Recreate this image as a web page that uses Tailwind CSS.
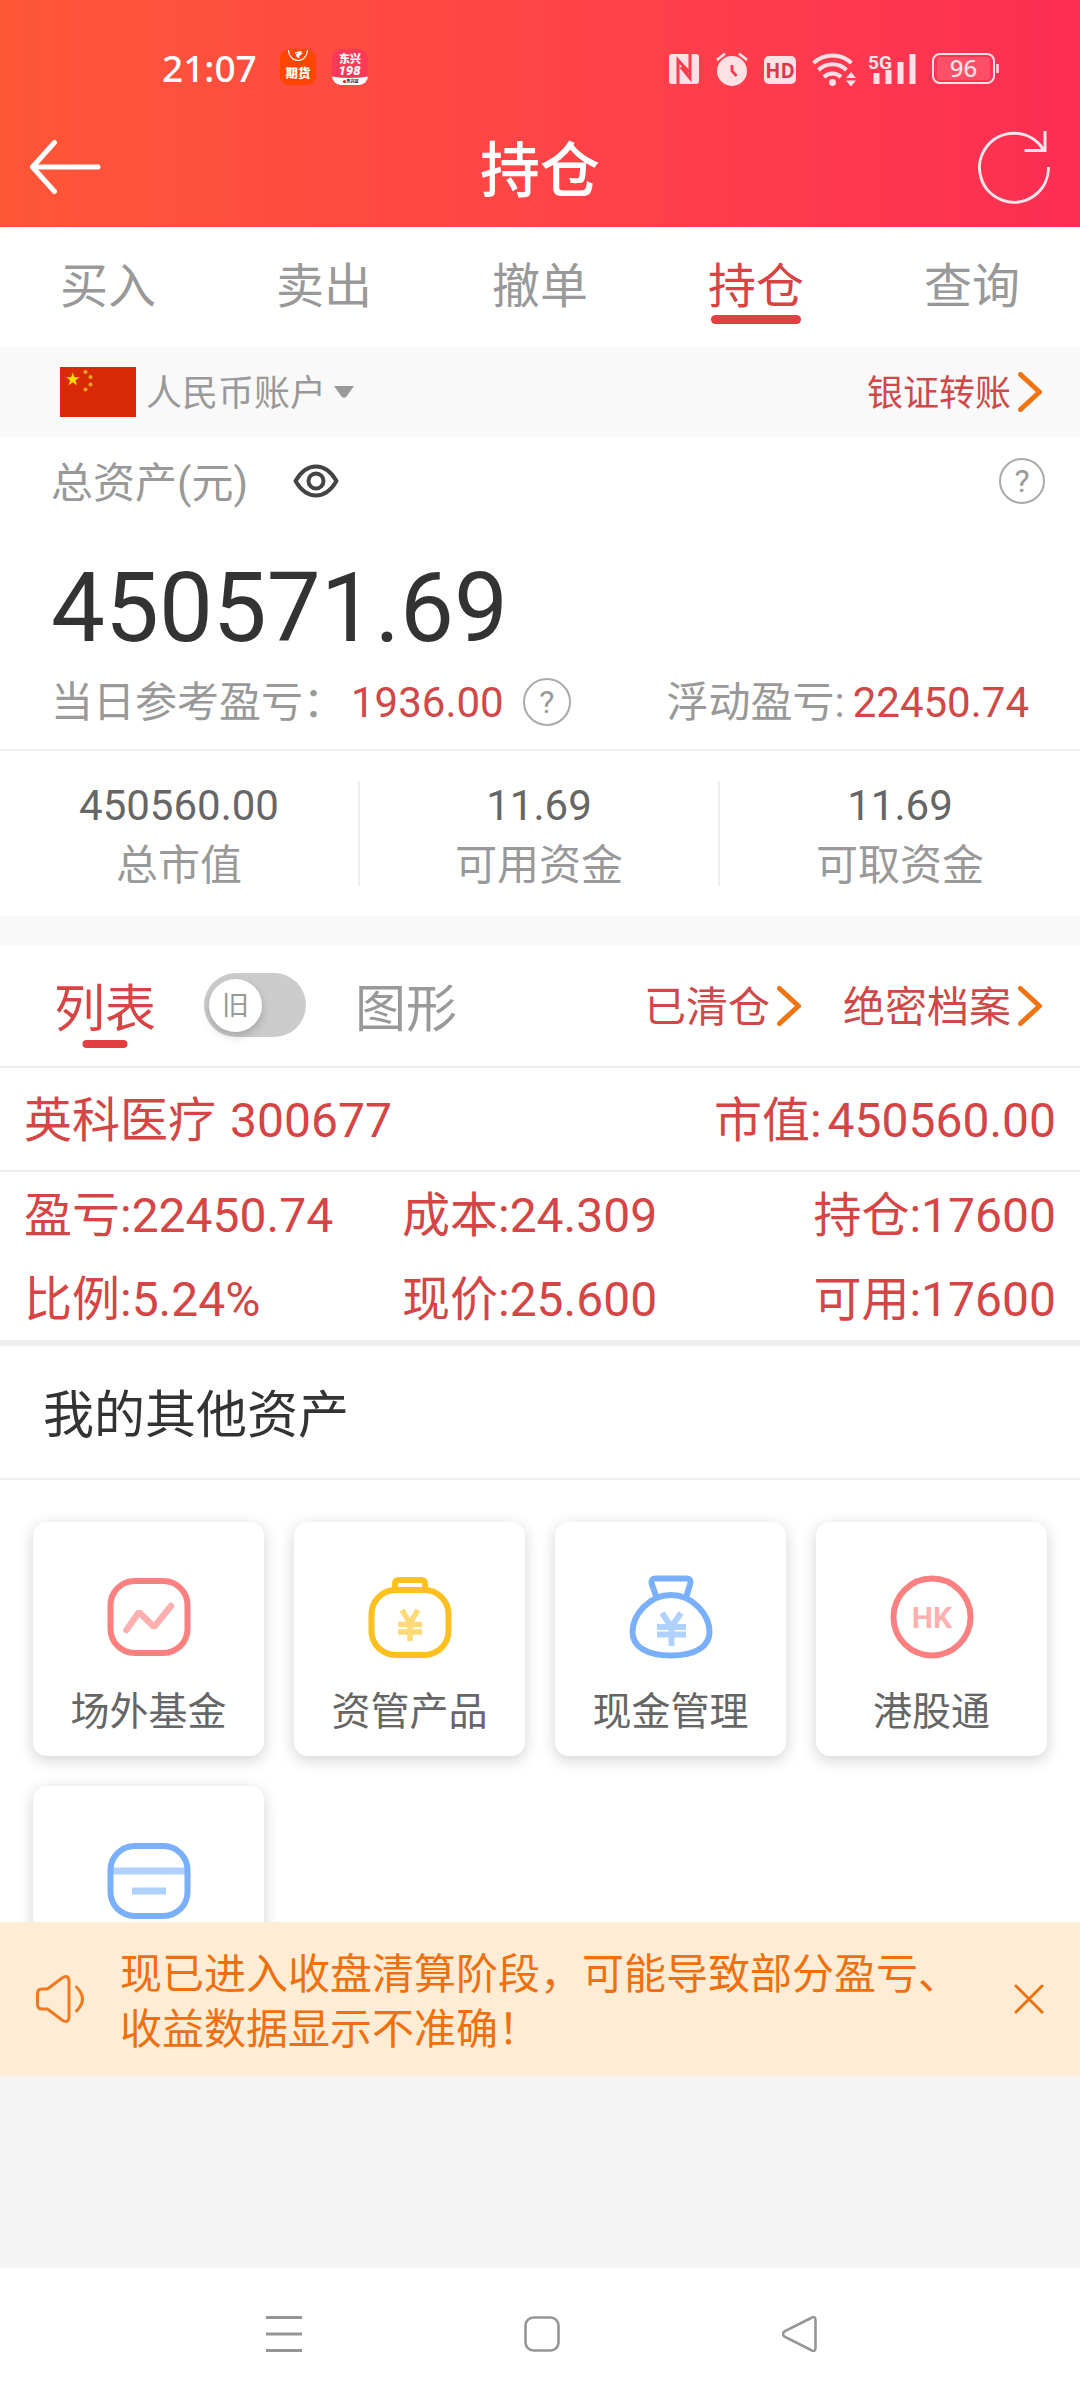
<!DOCTYPE html>
<html lang="zh-CN">
<head>
<meta charset="utf-8">
<meta name="viewport" content="width=device-width, initial-scale=1">
<title>持仓</title>
<script src="https://cdn.jsdelivr.net/npm/@tailwindcss/browser@4"></script>
</head>
<body class="flex h-screen flex-col overflow-hidden bg-[#f4f4f4] font-[Roboto,'Noto_Sans_CJK_SC',sans-serif] text-[42px] leading-[54px] text-[#999]">

<!-- Status bar and title bar -->
<header class="shrink-0 bg-linear-to-r from-[#ff5636] to-[#fd2d53] text-white">
  <div class="flex h-[109px] items-end justify-between pr-[81px] pb-[23px] pl-[162px]">
    <div class="flex items-center">
      <span class="w-[118px] pt-0.5 font-['Noto_Sans',sans-serif] text-[37px] leading-[36px] font-medium">21:07</span>
      <svg class="mr-4 size-9" viewBox="0 0 36 36" role="img" aria-label="期货">
        <rect width="36" height="36" rx="9" fill="#ff4500"/>
        <path d="M8.500 1a9.500 10.500 0 0 0 19 0" fill="none" stroke="#fff" stroke-width="1.200"/>
        <path d="M15 4l5-1-2 2 4-1-5 4 2-3-3 1M18 6l1 3" fill="none" stroke="#fff" stroke-width="1.400"/>
        <text x="18" y="28.500" text-anchor="middle" font-size="12.500" font-weight="900" fill="#fff">期货</text>
      </svg>
      <svg class="size-9" viewBox="0 0 36 36" role="img" aria-label="东兴198">
        <defs><clipPath id="dx"><rect width="36" height="36" rx="9"/></clipPath></defs>
        <g clip-path="url(#dx)">
          <rect width="36" height="36" fill="#fb3a58"/>
          <path d="M0 27.500Q18 30.500 36 27.500V36H0z" fill="#fff"/>
        </g>
        <text x="18" y="13.500" text-anchor="middle" font-size="11" font-weight="900" fill="#fff">东兴</text>
        <text x="17.500" y="26" text-anchor="middle" font-size="13" font-weight="900" font-style="italic" fill="#fff">198</text>
        <circle cx="12.500" cy="32.500" r="1.600" fill="#d22"/>
        <text x="20.500" y="34.200" text-anchor="middle" font-size="4" font-weight="900" fill="#222">东兴证</text>
      </svg>
    </div>
    <div class="flex items-center text-[#ffe1e5]">
      <svg class="mr-[17px] h-[34px] w-[30px]" viewBox="0 0 30 34" role="img" aria-label="NFC">
        <rect y="2" width="30" height="30" rx="3" fill="currentColor"/>
        <path d="M9 32V8l11 12M21 2v24L12 15" fill="none" stroke="#fd3b4a" stroke-width="3"/>
      </svg>
      <svg class="mr-4 h-[34px] w-8" viewBox="0 0 32 34" role="img" aria-label="闹钟">
        <circle cx="16" cy="19" r="15" fill="currentColor"/>
        <path d="M1 8l8-6.500M31 8l-8-6.500" stroke="currentColor" stroke-width="2.600"/>
        <path d="M16 13v6l4.500 5" fill="none" stroke="#fd3b4a" stroke-width="2.800"/>
      </svg>
      <svg class="mr-4 h-[34px] w-8" viewBox="0 0 32 34" role="img" aria-label="HD">
        <rect y="4" width="32" height="28" rx="5" fill="currentColor"/>
        <text x="16" y="25.500" text-anchor="middle" font-size="20" font-weight="700" fill="#d93a48" font-family="'Noto Sans CJK SC'">HD</text>
      </svg>
      <svg class="mr-3 h-[34px] w-[45px]" viewBox="0 0 45 34" role="img" aria-label="Wi-Fi">
        <g fill="none" stroke="currentColor" stroke-width="4">
          <path d="M1.500 11a28 28 0 0 1 38 0"/>
          <path d="M6.500 18a20 20 0 0 1 28 0"/>
          <path d="M12 25a12 12 0 0 1 17 0"/>
        </g>
        <circle cx="20.500" cy="30.500" r="3.400" fill="currentColor"/>
        <path d="M39 20l5 6H34zM39 34.500l5-6H34z" fill="currentColor"/>
      </svg>
      <svg class="mr-4 h-[34px] w-[47px] overflow-visible" viewBox="0 0 47 34" role="img" aria-label="5G">
        <text x="-1" y="16.500" font-size="19" font-weight="700" fill="currentColor" font-family="Roboto">5G</text>
        <path d="M7.500 21v11M19.500 18v14M31.500 10v22M43.500 2v30" stroke="currentColor" stroke-width="6"/>
      </svg>
      <svg class="h-[34px] w-[67px]" viewBox="0 0 67 34" role="img" aria-label="96%">
        <rect x="1" y="2" width="61" height="29" rx="7" fill="none" stroke="currentColor" stroke-width="2"/>
        <rect x="5" y="5" width="53" height="23" rx="3" fill="#fff" opacity=".14"/>
        <path d="M65.500 12v9" stroke="currentColor" stroke-width="2.500"/>
        <text x="31.500" y="25" text-anchor="middle" font-size="24" font-weight="500" fill="currentColor" font-family="'Noto Sans'">96</text>
      </svg>
    </div>
  </div>
  <div class="flex h-[118px] items-center justify-between px-[30px]">
    <button type="button" aria-label="返回" class="w-[72px]">
      <svg class="h-[60px] w-[72px]" viewBox="0 0 72 60"><path d="M24.500 4.500L2.500 29l22 24.500M2.500 29H68" fill="none" stroke="#fff" stroke-width="5" stroke-linecap="round" stroke-linejoin="round"/></svg>
    </button>
    <h1 class="pt-2 text-[60px] leading-[60px] font-medium">持仓</h1>
    <button type="button" aria-label="刷新" class="w-[72px]">
      <svg class="size-[74px]" viewBox="0 0 74 74"><path d="M70.500 36A34.500 34.500 0 1 1 65 18" fill="none" stroke="#ffe6ea" stroke-width="3"/><path d="M67 0V19.500H46.500" fill="none" stroke="#ffe6ea" stroke-width="3"/></svg>
    </button>
  </div>
</header>

<main class="min-h-0 flex-1 overflow-hidden bg-white">
  <nav class="grid h-[120px] grid-cols-5 text-center text-[48px] leading-[120px]" aria-label="交易">
    <a href="#buy">买入</a>
    <a href="#sell">卖出</a>
    <a href="#cancel">撤单</a>
    <a href="#hold" aria-current="page" class="relative text-[#d94343] after:absolute after:bottom-[23px] after:left-1/2 after:h-[9px] after:w-[90px] after:-translate-x-1/2 after:rounded-full after:bg-[#e04042]">持仓</a>
    <a href="#query">查询</a>
  </nav>

  <!-- Account selector -->
  <div class="flex h-[90px] items-center justify-between bg-[#f9f9f9] pr-[38px] pl-[60px] text-[36px] leading-[54px]">
    <div class="flex items-center">
      <svg class="mr-[10px] h-[50px] w-[76px]" viewBox="0 0 76 50" role="img" aria-label="中国">
        <rect width="76" height="50" fill="#d82a08"/>
        <path d="M12.800 5.500l1.700 4.800h5l-4 3 1.500 4.900-4.200-3-4.200 3 1.500-4.900-4-3h5z" fill="#ffde00"/>
        <g fill="#f5a31c"><circle cx="25.500" cy="5" r="2"/><circle cx="30.500" cy="10" r="2"/><circle cx="30.500" cy="17.500" r="2"/><circle cx="25.500" cy="22.500" r="2"/></g>
      </svg>
      <select aria-label="账户" class="mr-2 w-[180px] appearance-none bg-transparent pt-1"><option>人民币账户</option></select>
      <svg class="h-3 w-5" viewBox="0 0 20 12"><path d="M0 0h20l-7.500 10.500q-2.500 2.500-5 0z" fill="#999"/></svg>
    </div>
    <a href="#transfer" class="flex items-center gap-[7px] text-[#d04848]"><span class="pt-1">银证转账</span>
      <svg class="h-10 w-6" viewBox="0 0 24 40"><path d="M2.500 2.500L21.500 20 2.500 37.500" fill="none" stroke="#f07412" stroke-width="5" stroke-linecap="round"/></svg>
    </a>
  </div>

  <!-- Asset summary -->
  <section aria-label="总资产">
    <div class="flex h-[94px] items-center pr-[35px] pb-[6px] pl-[51px]">
      <h2 class="pt-[6px]">总资产(元)</h2>
      <button type="button" aria-label="显示或隐藏金额" class="ml-[45px]">
        <svg class="h-[34px] w-[46px]" viewBox="0 0 46 34" fill="none" stroke="#444" stroke-width="4"><path d="M2.500 17Q11 2.500 23 2.500T43.500 17Q35 31.500 23 31.500T2.500 17z" stroke-linejoin="round"/><circle cx="23" cy="17" r="7.500"/></svg>
      </button>
      <button type="button" aria-label="总资产说明" class="ml-auto flex size-[46px] items-center justify-center rounded-full border-2 border-[#aaa] text-[32px]">?</button>
    </div>
    <p class="mt-[21px] pl-[51px] text-[96px] leading-[112px] text-[#333]">450571.69</p>
    <div class="mt-[7px] flex h-[78px] items-center justify-between pr-[51px] pb-4 pl-[51px]">
      <p class="flex items-center"><span class="pt-0.5">当日参考盈亏：</span><span class="ml-[6px] pt-0.5 text-[#d04848]">1936.00</span>
        <button type="button" aria-label="当日参考盈亏说明" class="ml-[19px] flex size-[48px] items-center justify-center rounded-full border-2 border-[#aaa] text-[32px]">?</button>
      </p>
      <p class="pt-0.5">浮动盈亏:<span class="ml-2 text-[#d04848]">22450.74</span></p>
    </div>
    <dl class="grid grid-cols-3 divide-x-2 divide-[#eee] border-t-2 border-[#eee] py-[30px] text-center">
      <div class="flex h-[105px] flex-col-reverse justify-center pt-1"><dt class="leading-[60px]">总市值</dt><dd class="leading-[60px] text-[#666]">450560.00</dd></div>
      <div class="flex h-[105px] flex-col-reverse justify-center pt-1"><dt class="leading-[60px]">可用资金</dt><dd class="leading-[60px] text-[#666]">11.69</dd></div>
      <div class="flex h-[105px] flex-col-reverse justify-center pt-1"><dt class="leading-[60px]">可取资金</dt><dd class="leading-[60px] text-[#666]">11.69</dd></div>
    </dl>
  </section>

  <!-- Positions -->
  <section aria-label="持仓列表" class="border-t-[30px] border-[#f9f9f9]">
    <div class="flex h-[122px] items-center border-b-2 border-[#eee] pr-[38px] pl-[54px]">
      <a href="#list" class="relative pt-2 text-[51px] leading-[112px] text-[#d94343] after:absolute after:bottom-[18px] after:left-1/2 after:h-2 after:w-[45px] after:-translate-x-1/2 after:rounded-full after:bg-[#e04042]">列表</a>
      <label class="relative mb-0.5 ml-12 flex h-[64px] w-[102px] items-center rounded-full bg-[#ccc] pl-[5px]">
        <input type="checkbox" role="switch" aria-label="旧版" class="absolute inset-0 appearance-none">
        <span class="flex size-[53px] items-center justify-center rounded-full bg-white pt-0.5 text-[27px] shadow-[0_4px_10px_rgba(0,0,0,0.2)]">旧</span>
      </label>
      <a href="#chart" class="ml-[49px] pt-2 text-[51px] leading-[112px]">图形</a>
      <a href="#cleared" class="ml-auto flex items-center gap-[7px] text-[#d04848]"><span class="pt-1">已清仓</span>
        <svg class="h-10 w-6" viewBox="0 0 24 40"><path d="M2.500 2.500L21.500 20 2.500 37.500" fill="none" stroke="#f07412" stroke-width="5" stroke-linecap="round"/></svg>
      </a>
      <a href="#archive" class="ml-[42px] flex items-center gap-[7px] text-[#d04848]"><span class="pt-1">绝密档案</span>
        <svg class="h-10 w-6" viewBox="0 0 24 40"><path d="M2.500 2.500L21.500 20 2.500 37.500" fill="none" stroke="#f07412" stroke-width="5" stroke-linecap="round"/></svg>
      </a>
    </div>
    <article class="border-b-6 border-[#eee] text-[48px] text-[#d64545]">
      <div class="flex h-[104px] items-center justify-between border-b-2 border-[#eee] px-6 pt-1">
        <h3>英科医疗<span class="ml-[14px]">300677</span></h3>
        <p>市值:<span class="ml-[6px]">450560.00</span></p>
      </div>
      <div class="grid h-[168px] grid-cols-[378fr_378fr_276fr] px-6 pt-0.5 leading-[84px]">
        <p>盈亏:22450.74</p><p>成本:24.309</p><p class="text-right">持仓:17600</p>
        <p>比例:5.24%</p><p>现价:25.600</p><p class="text-right">可用:17600</p>
      </div>
    </article>
  </section>

  <!-- Other assets -->
  <section aria-labelledby="other">
    <h2 id="other" class="border-b-2 border-[#eee] pt-2 pl-[43px] text-[51px] leading-[124px] text-[#333]">我的其他资产</h2>
    <div class="grid grid-cols-4 gap-[30px] px-[33px] pt-[42px] text-[39px] text-[#666]">
      <a href="#fund" class="flex h-[234px] flex-col items-center rounded-[14px] bg-white pt-[53px] shadow-[0_4px_16px_rgba(0,0,0,0.18)]">
        <svg class="mb-[26px] size-[84px]" viewBox="0 0 84 84" fill="none"><rect x="3.500" y="6" width="77" height="72" rx="24" stroke="#fc8080" stroke-width="6"/><path d="M19.500 55L32 37l15 15 17-21" stroke="#feb0b0" stroke-width="6.500" stroke-linecap="round" stroke-linejoin="bevel"/></svg>
        场外基金
      </a>
      <a href="#managed" class="flex h-[234px] flex-col items-center rounded-[14px] bg-white pt-[53px] shadow-[0_4px_16px_rgba(0,0,0,0.18)]">
        <svg class="mb-[26px] size-[84px]" viewBox="0 0 84 84" fill="none"><rect x="3.500" y="15" width="77" height="65" rx="24" stroke="#fdc01e" stroke-width="6"/><path d="M27 15V9q0-4 4-4h22q4 0 4 4v6" stroke="#fdc01e" stroke-width="6"/><path d="M34 35l8 13 8-13M30 49.500h24M30 57h24M42 48v18" stroke="#fed977" stroke-width="5.500"/></svg>
        资管产品
      </a>
      <a href="#cash" class="flex h-[234px] flex-col items-center rounded-[14px] bg-white pt-[53px] shadow-[0_4px_16px_rgba(0,0,0,0.18)]">
        <svg class="mb-[26px] size-[84px]" viewBox="0 0 84 84" fill="none"><path d="M42 20C20 20 3.500 40 3.500 57 3.500 71 17 80.500 42 80.500S80.500 71 80.500 57C80.500 40 64 20 42 20z" stroke="#7ab0fb" stroke-width="6"/><path d="M27 21L22.500 8q-.500-4.500 4-4.500h31q4.500 0 4 4.500L57.500 21" stroke="#7ab0fb" stroke-width="6"/><path d="M33 38l9.500 14L52 38M28 52h29M28 59.500h29M42.500 52v19" stroke="#b0d0fd" stroke-width="6"/></svg>
        现金管理
      </a>
      <a href="#hk" class="flex h-[234px] flex-col items-center rounded-[14px] bg-white pt-[53px] shadow-[0_4px_16px_rgba(0,0,0,0.18)]">
        <svg class="mb-[26px] size-[84px]" viewBox="0 0 84 84" fill="none"><circle cx="42" cy="42" r="38.500" stroke="#fc8080" stroke-width="6"/><text x="42" y="53" text-anchor="middle" font-size="30" font-weight="700" fill="#feb0b0">HK</text></svg>
        港股通
      </a>
      <a href="#card" aria-label="更多资产" class="flex h-[234px] flex-col items-center rounded-[14px] bg-white pt-[53px] shadow-[0_4px_16px_rgba(0,0,0,0.18)]">
        <svg class="size-[84px]" viewBox="0 0 84 84" fill="none"><path d="M6 32h72M25 52h34" stroke="#b0d0fd" stroke-width="7"/><rect x="3.500" y="7" width="77" height="70" rx="24" stroke="#7ab0fb" stroke-width="6"/></svg>
      </a>
    </div>
  </section>
</main>

<!-- Settlement notice -->
<aside role="status" class="flex shrink-0 items-center bg-[#feedd4] py-[19px] pr-[35px] pl-9 text-[#f07010]">
  <svg class="mr-[36px] size-12 shrink-0" viewBox="0 0 48 48" fill="none" stroke="#f07a24" stroke-width="3" stroke-linecap="round" stroke-linejoin="round"><path d="M6 14h5.500L26 3Q32.500-1 33 6v36q-.500 7-7 3L11.500 34H6q-4.500 0-4.500-4.500v-11Q1.500 14 6 14zM40.500 12q12 12 0 24"/></svg>
  <p class="pt-[6px] leading-[55px]">现已进入收盘清算阶段，可能导致部分盈亏、<br>收益数据显示不准确！</p>
  <button type="button" aria-label="关闭" class="ml-auto">
    <svg class="size-8" viewBox="0 0 32 32"><path d="M3 3l26 26M29 3L3 29" stroke="#f07010" stroke-width="3" stroke-linecap="round"/></svg>
  </button>
</aside>

<!-- System navigation -->
<nav aria-label="系统导航" class="mt-48 flex h-[132px] shrink-0 items-center justify-center gap-[222px] bg-white pl-1">
  <button type="button" aria-label="最近任务"><svg class="size-9" viewBox="0 0 36 36"><path d="M0 1.500h36M0 18h36M0 34.500h36" stroke="#959595" stroke-width="3"/></svg></button>
  <button type="button" aria-label="主屏幕"><svg class="size-9" viewBox="0 0 36 36"><rect x="1.500" y="1.500" width="33" height="33" rx="8" fill="none" stroke="#959595" stroke-width="2.600"/></svg></button>
  <button type="button" aria-label="返回上一页"><svg class="size-9" viewBox="0 0 36 36"><path d="M29 2Q33.500-1 33.500 4.500v27q0 5.500-4.500 2.500L3 21q-4-3 0-6z" fill="none" stroke="#959595" stroke-width="2.600"/></svg></button>
</nav>
</body>
</html>
